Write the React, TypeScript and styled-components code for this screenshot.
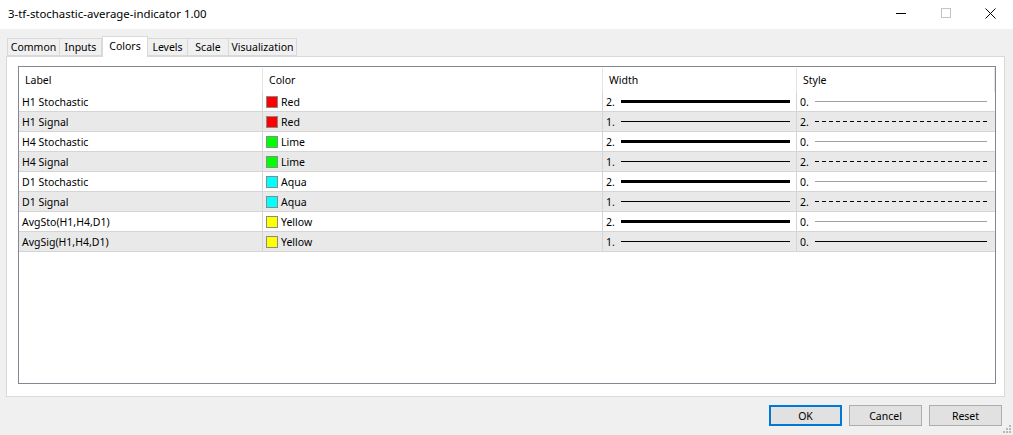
import * as React from 'react'
import styled, {createGlobalStyle} from 'styled-components'

const GlobalStyle = createGlobalStyle`
  html, body {
    margin: 0;
    padding: 0;
    background: #f0f0f0;
  }
  body {
    font-family: "Noto Sans", "Open Sans", sans-serif;
    font-size: 10.5px;
    color: #000;
  }
`

// Window frame
const Window = styled.div`
  width: 1013px;
  height: 435px;
  display: flex;
  flex-direction: column;
  background: #f0f0f0;
  overflow: hidden;
  position: relative;
`

const TitleBar = styled.div`
  height: 29px;
  flex: none;
  display: flex;
  align-items: center;
  background: #fff;
  padding-left: 8px;
`

const Title = styled.span`
  flex: 1;
  font-size: 11.4px;
  margin-top: -3px;
`

const Controls = styled.div`
  display: flex;
  align-self: stretch;
`

const ControlButton = styled.div`
  width: 45px;
  display: flex;
  align-items: center;
  justify-content: center;
  margin-top: -3px;
`

// Tabs
const Body = styled.div`
  flex: 1;
  display: flex;
  flex-direction: column;
  padding: 7px 8px 0 6px;
`

const TabStrip = styled.div`
  display: flex;
  align-items: flex-end;
  height: 20px;
  padding-left: 1px;
  position: relative;
  z-index: 1;
`

interface TabProps {
  $active?: boolean
  $first?: boolean
  $w: number
}

const Tab = styled.div<TabProps>`
  box-sizing: border-box;
  width: ${({$w}) => $w}px;
  height: ${({$active}) => ($active ? 21 : 18)}px;
  margin-bottom: ${({$active}) => ($active ? -1 : 0)}px;
  display: flex;
  align-items: center;
  justify-content: center;
  border-top: 1px solid #d9d9d9;
  border-right: 1px solid #d9d9d9;
  border-bottom: ${({$active}) => ($active ? 'none' : '1px solid #d9d9d9')};
  border-left: ${({$first, $active}) => ($first || $active ? '1px solid #d9d9d9' : 'none')};
  background: ${({$active}) => ($active ? '#fff' : '#f0f0f0')};
  padding-bottom: ${({$active}) => ($active ? 2 : 0)}px;
`

const Panel = styled.div`
  height: 341px;
  box-sizing: border-box;
  background: #fff;
  border: 1px solid #d9d9d9;
  padding: 9px 9px 0 11px;
`

// List view
const ListBox = styled.div`
  box-sizing: border-box;
  width: 978px;
  height: 318px;
  border: 1px solid #828790;
  background: #fff;
`

const Row = styled.div<{$header?: boolean; $alt?: boolean}>`
  display: grid;
  grid-template-columns: 244px 340px 194px 198px;
  width: 976px;
  height: ${({$header}) => ($header ? 25 : 20)}px;
  box-sizing: border-box;
  background: ${({$alt}) => ($alt ? '#e9e9e9' : '#fff')};
  border-bottom: ${({$header}) => ($header ? 'none' : '1px solid #d5d5d5')};
`

const HeadCell = styled.div`
  display: flex;
  align-items: center;
  padding-left: 6px;
  border-right: 1px solid #e5e5e5;
  margin-top: 1px;
`

const Cell = styled.div<{$last?: boolean}>`
  display: flex;
  align-items: center;
  padding-left: 3px;
  border-right: ${({$last}) => ($last ? 'none' : '1px solid #d5d5d5')};
  min-width: 0;
`

const Swatch = styled.span<{$color: string}>`
  width: 10px;
  height: 10px;
  border: 1px solid #8a8a8a;
  background: ${({$color}) => $color};
  margin-right: 3px;
  flex: none;
`

const Num = styled.span`
  width: 15px;
  flex: none;
`

const LineTrack = styled.div<{$pad: number}>`
  flex: 1;
  display: flex;
  align-items: center;
  margin-right: ${({$pad}) => $pad}px;
`

const Stroke = styled.div<{$thick?: number; $color?: string; $dashed?: boolean}>`
  flex: 1;
  height: ${({$thick}) => $thick || 1}px;
  background: ${({$dashed, $color}) =>
    $dashed
      ? `repeating-linear-gradient(to right, #000 0 4px, transparent 4px 7px)`
      : $color || '#000'};
`

// Footer buttons
const Footer = styled.div`
  display: flex;
  justify-content: flex-end;
  gap: 7px;
  padding: 8px 3px 0 0;
`

const Button = styled.div<{$primary?: boolean}>`
  box-sizing: border-box;
  width: 73px;
  height: 21px;
  display: flex;
  align-items: center;
  justify-content: center;
  background: #e1e1e1;
  border: ${({$primary}) => ($primary ? '2px solid #0078d7' : '1px solid #adadad')};
`

const Grip = styled.svg`
  position: absolute;
  right: 1px;
  bottom: 1px;
`

interface Buffer {
  label: string
  color: string
  colorName: string
  width: number
  style: number
}

const buffers: Buffer[] = [
  {label: 'H1 Stochastic', color: '#ff0000', colorName: 'Red', width: 2, style: 0},
  {label: 'H1 Signal', color: '#ff0000', colorName: 'Red', width: 1, style: 2},
  {label: 'H4 Stochastic', color: '#00ff00', colorName: 'Lime', width: 2, style: 0},
  {label: 'H4 Signal', color: '#00ff00', colorName: 'Lime', width: 1, style: 2},
  {label: 'D1 Stochastic', color: '#00ffff', colorName: 'Aqua', width: 2, style: 0},
  {label: 'D1 Signal', color: '#00ffff', colorName: 'Aqua', width: 1, style: 2},
  {label: 'AvgSto(H1,H4,D1)', color: '#ffff00', colorName: 'Yellow', width: 2, style: 0},
  {label: 'AvgSig(H1,H4,D1)', color: '#ffff00', colorName: 'Yellow', width: 1, style: 0},
]

const tabs = [
  {name: 'Common', w: 53},
  {name: 'Inputs', w: 42},
  {name: 'Colors', w: 46},
  {name: 'Levels', w: 40},
  {name: 'Scale', w: 41},
  {name: 'Visualization', w: 68},
]

function BufferRow({buf, alt}: {buf: Buffer; alt: boolean}) {
  return (
    <Row $alt={alt}>
      <Cell>{buf.label}</Cell>
      <Cell>
        <Swatch $color={buf.color} />
        {buf.colorName}
      </Cell>
      <Cell>
        <Num>{buf.width}.</Num>
        <LineTrack $pad={6}>
          <Stroke $thick={buf.width === 2 ? 3 : 1} />
        </LineTrack>
      </Cell>
      <Cell $last>
        <Num>{buf.style}.</Num>
        <LineTrack $pad={8}>
          {buf.style === 2 ? (
            <Stroke $dashed />
          ) : (
            <Stroke $color={buf.width === 1 ? '#000' : '#a0a0a0'} />
          )}
        </LineTrack>
      </Cell>
    </Row>
  )
}

export default function App() {
  return (
    <Window>
      <GlobalStyle />
      <TitleBar>
        <Title>3-tf-stochastic-average-indicator 1.00</Title>
        <Controls>
          <ControlButton>
            <svg width="10" height="10" viewBox="0 0 10 10">
              <path d="M0 5.5h10" stroke="#000" strokeWidth="1" />
            </svg>
          </ControlButton>
          <ControlButton>
            <svg width="10" height="10" viewBox="0 0 10 10">
              <rect x="0.5" y="0.5" width="9" height="9" fill="none" stroke="#c4c4c4" />
            </svg>
          </ControlButton>
          <ControlButton>
            <svg width="11" height="11" viewBox="0 0 11 11">
              <path d="M0.5 0.5l10 10M10.5 0.5l-10 10" stroke="#000" strokeWidth="1" />
            </svg>
          </ControlButton>
        </Controls>
      </TitleBar>
      <Body>
        <TabStrip>
          {tabs.map((t, i) => (
            <Tab key={t.name} $w={t.w} $first={i === 0} $active={t.name === 'Colors'}>
              {t.name}
            </Tab>
          ))}
        </TabStrip>
        <Panel>
          <ListBox>
            <Row $header>
              <HeadCell>Label</HeadCell>
              <HeadCell>Color</HeadCell>
              <HeadCell>Width</HeadCell>
              <HeadCell>Style</HeadCell>
            </Row>
            {buffers.map((b, i) => (
              <BufferRow key={b.label} buf={b} alt={i % 2 === 1} />
            ))}
          </ListBox>
        </Panel>
        <Footer>
          <Button $primary>OK</Button>
          <Button>Cancel</Button>
          <Button>Reset</Button>
        </Footer>
      </Body>
      <Grip width="10" height="10" viewBox="0 0 10 10">
        {[
          [8, 2],
          [8, 5],
          [5, 5],
          [8, 8],
          [5, 8],
          [2, 8],
        ].map(([x, y]) => (
          <rect key={`${x}-${y}`} x={x - 1} y={y - 1} width="2" height="2" fill="#b8b8b8" />
        ))}
      </Grip>
    </Window>
  )
}
